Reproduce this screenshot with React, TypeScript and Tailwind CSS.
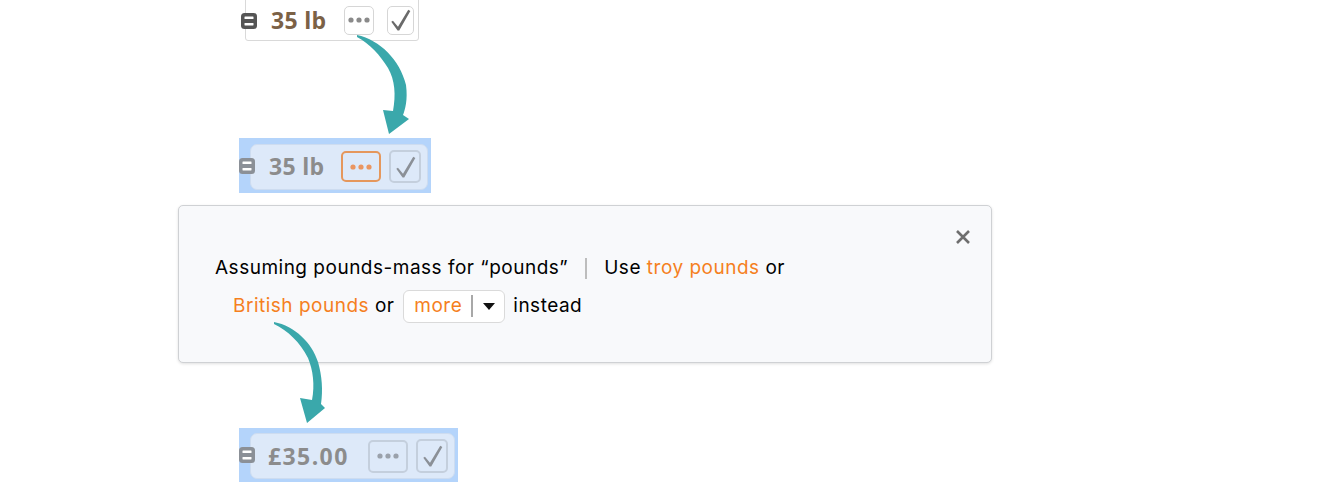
import React from "react";

function RowIcon({ color }: { color: string }) {
  return (
    <svg width="16" height="16" viewBox="0 0 16 16" className="relative z-10 shrink-0">
      <rect x="0" y="0" width="16" height="16" rx="3.5" fill={color} />
      <rect x="3.5" y="3.5" width="9" height="2.6" rx="0.4" fill="#ffffff" />
      <rect x="3.5" y="9.9" width="9" height="2.6" rx="0.4" fill="#ffffff" />
    </svg>
  );
}

function Dots({ color }: { color: string }) {
  return (
    <svg width="22" height="6" viewBox="0 0 22 6">
      <circle cx="3" cy="3" r="2.6" fill={color} />
      <circle cx="11" cy="3" r="2.6" fill={color} />
      <circle cx="19" cy="3" r="2.6" fill={color} />
    </svg>
  );
}

function Check({ color }: { color: string }) {
  return (
    <svg width="21" height="22" viewBox="0 0 20 21">
      <path d="M1.2 12.2 L2.8 11.2 L7.6 17.0 L17.4 0.8 L19.4 2.0 L8.8 20.5 L7.2 20.5 Z" fill={color} />
    </svg>
  );
}

function Arrows() {
  return (
    <svg
      className="absolute left-0 top-0 pointer-events-none z-20"
      width="1340"
      height="484"
      viewBox="0 0 1340 484"
    >
      <path
        d="M357,35 C380,40 400,60 406,85 C408,100 405,110 403,115 L409,119 L389,134 L383,110 L393,111 C396,95 395,80 388,68 C380,55 370,44 357,37 Z"
        fill="#3aa8ab"
      />
      <path
        d="M274,322 C295,326 312,343 318,362 C322,376 323,390 321,404 L325,408 L307,423 L300,398 L312,400 C315,385 313,370 308,358 C300,342 288,331 274,324 Z"
        fill="#3aa8ab"
      />
    </svg>
  );
}

const sans = { fontFamily: "Inter, 'Liberation Sans', sans-serif" };
const bold = { fontFamily: "'Open Sans', 'Liberation Sans', sans-serif" };

export default function App() {
  return (
    <div className="relative w-[1340px] h-[484px] bg-white overflow-hidden">
      <Arrows />
      <div className="flex flex-col">
        {/* Row 1 */}
        <div className="ml-[241px] flex items-center h-[41px]">
          <RowIcon color="#555555" />
          <div className="-ml-[12px] -mt-[1px] flex items-center h-[42px] w-[174px] border border-[#d9d9d9] rounded-b-[3px] pl-[25px]">
            <span
              className="w-[54px] whitespace-nowrap text-[23px] font-bold text-[#7b6146] leading-none tracking-[0.3px]"
              style={bold}
            >
              35 lb
            </span>
            <div className="ml-[19px] w-[30px] h-[29px] border border-[#d6d6d6] rounded-[5px] flex items-center justify-center bg-white">
              <Dots color="#8a8a8a" />
            </div>
            <div className="ml-[13px] w-[27px] h-[29px] border border-[#d6d6d6] rounded-[5px] flex items-center justify-center bg-white">
              <Check color="#6a6a6a" />
            </div>
          </div>
        </div>

        {/* Row 2 */}
        <div className="mt-[97px] ml-[239px] w-[192px] h-[55px] bg-[#b4d4fb] flex items-center">
          <RowIcon color="#8b9097" />
          <div className="-ml-[5px] mt-[2px] flex items-center h-[46px] w-[178px] bg-[#dde9f9] border border-[#cddcf0] rounded-[7px] pl-[18px]">
            <span
              className="w-[54px] whitespace-nowrap text-[23px] font-bold text-[#8c8c8c] leading-none tracking-[0.3px]"
              style={bold}
            >
              35 lb
            </span>
            <div className="ml-[18px] w-[40px] h-[31px] border-2 border-[#e5975c] rounded-[5px] flex items-center justify-center">
              <Dots color="#ea9560" />
            </div>
            <div className="ml-[8px] w-[32px] h-[33px] border-2 border-[#c4cfdd] rounded-[5px] flex items-center justify-center">
              <Check color="#8b9097" />
            </div>
          </div>
        </div>

        {/* Dialog */}
        <div className="mt-[12px] ml-[178px] w-[814px] h-[158px] relative border border-[#cfd1d4] rounded-[5px] bg-[#f8f9fb] shadow-[0_1px_3px_rgba(0,0,0,0.12)]">
          <div className="absolute right-[20px] top-[23px] w-[16px] h-[16px]">
            <svg width="16" height="16" viewBox="0 0 16 16">
              <path d="M2 2 L14 14 M14 2 L2 14" stroke="#6e6e6e" strokeWidth="2.6" />
            </svg>
          </div>
          <div className="pt-[43px] pl-[36px] text-[19px] tracking-[0.5px] text-black" style={sans}>
            <div className="flex items-center h-[38px] whitespace-nowrap">
              <span>Assuming pounds-mass for “pounds”</span>
              <span className="mx-[17px] inline-block w-[2px] h-[21px] bg-[#bdbdbd]" />
              <span>Use&nbsp;</span>
              <span className="text-[#f5801e]">troy pounds</span>
              <span>&nbsp;or</span>
            </div>
            <div className="flex items-center h-[38px] pl-[18px] whitespace-nowrap">
              <span className="text-[#f5801e]">British pounds</span>
              <span>&nbsp;or&nbsp;</span>
              <div className="ml-[3px] mr-[8px] h-[33px] w-[102px] border border-[#dadada] rounded-[6px] bg-white flex items-center pl-[10px]">
                <span className="text-[#f5801e]">more</span>
                <span className="ml-[9px] inline-block w-[2px] h-[22px] bg-[#a8a8a8]" />
                <svg className="ml-[10px]" width="12" height="7" viewBox="0 0 12 7">
                  <path d="M0 0 L12 0 L6 7 Z" fill="#111111" />
                </svg>
              </div>
              <span>instead</span>
            </div>
          </div>
        </div>

        {/* Row 3 */}
        <div className="mt-[65px] ml-[239px] w-[219px] h-[54px] bg-[#b4d4fb] flex items-center">
          <RowIcon color="#8b9097" />
          <div className="-ml-[5px] mt-[2px] flex items-center h-[46px] w-[205px] bg-[#dde9f9] border border-[#cddcf0] rounded-[7px] pl-[17px]">
            <span
              className="w-[81px] whitespace-nowrap text-[23px] font-bold text-[#8c8c8c] leading-none tracking-[1.4px]"
              style={bold}
            >
              £35.00
            </span>
            <div className="ml-[19px] w-[40px] h-[33px] border-2 border-[#c4cfdd] rounded-[5px] flex items-center justify-center">
              <Dots color="#9aa1ab" />
            </div>
            <div className="ml-[8px] w-[32px] h-[34px] border-2 border-[#c4cfdd] rounded-[5px] flex items-center justify-center">
              <Check color="#8b9097" />
            </div>
          </div>
        </div>
      </div>
    </div>
  );
}
